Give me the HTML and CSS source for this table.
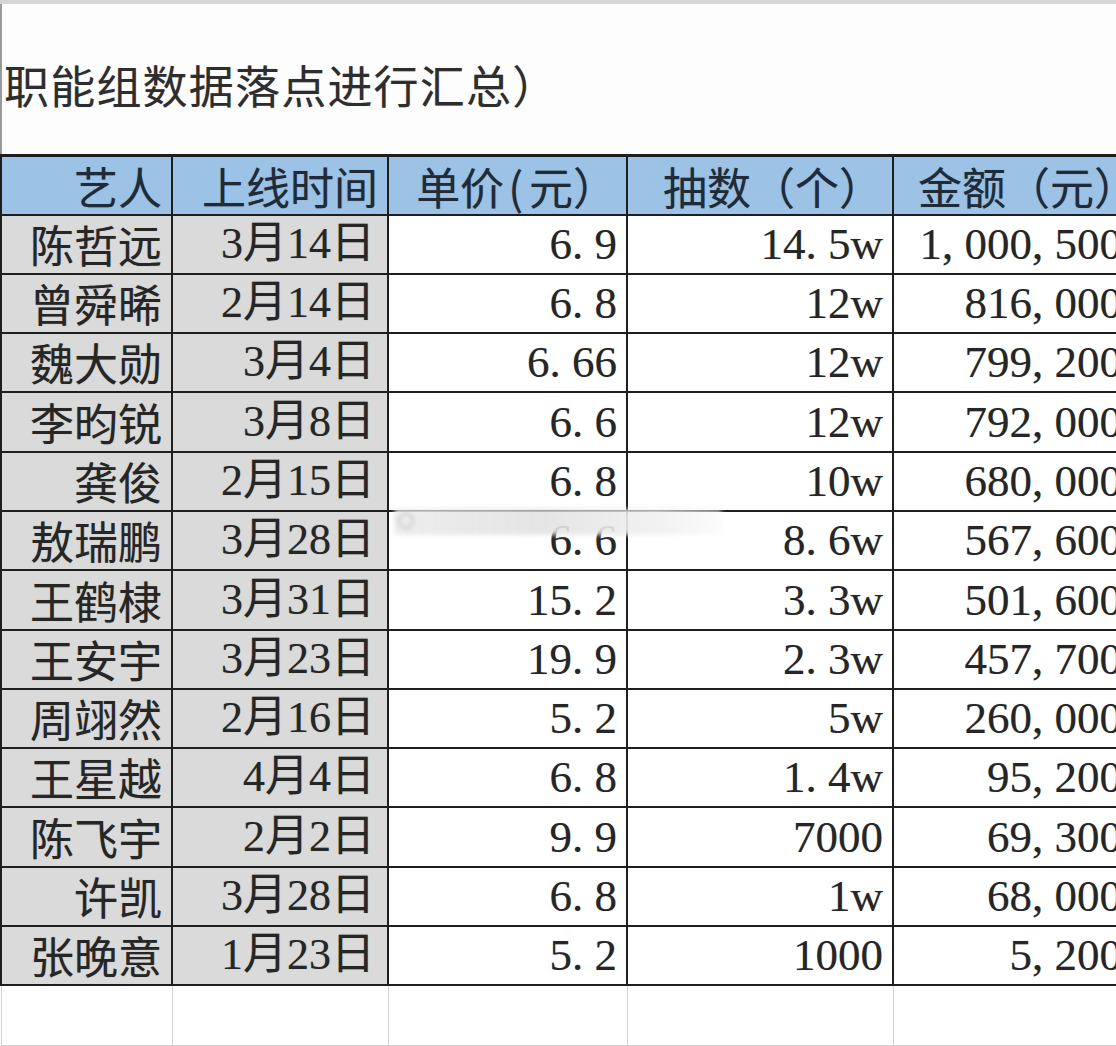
FILE: index.html
```html
<!DOCTYPE html>
<html lang="zh-CN">
<head>
<meta charset="utf-8">
<title>职能组数据落点进行汇总</title>
<link rel="stylesheet" href="styles.css">
</head>
<body>
<div class="sheet">
  <div class="topband"></div>
  <div class="title-area">
    <h1 class="title">职能组数据落点进行汇总）</h1>
  </div>
  <table class="data">
    <colgroup>
      <col class="c-name"><col class="c-date"><col class="c-price"><col class="c-count"><col class="c-amount">
    </colgroup>
    <thead>
      <tr>
        <th>艺人</th><th>上线时间</th><th>单价<span class="hp">(</span>元）</th><th>抽数（个）</th><th class="h-amount">金额（元）</th>
      </tr>
    </thead>
    <tbody>
      <tr><td class="name">陈哲远</td><td class="date">3月14日</td><td class="num">6<span class="p">.</span>9</td><td class="num">14<span class="p">.</span>5w</td><td class="num amt">1<span class="p">,</span>000<span class="p">,</span>500</td></tr>
      <tr><td class="name">曾舜晞</td><td class="date">2月14日</td><td class="num">6<span class="p">.</span>8</td><td class="num">12w</td><td class="num amt">816<span class="p">,</span>000</td></tr>
      <tr><td class="name">魏大勋</td><td class="date">3月4日</td><td class="num">6<span class="p">.</span>66</td><td class="num">12w</td><td class="num amt">799<span class="p">,</span>200</td></tr>
      <tr><td class="name">李昀锐</td><td class="date">3月8日</td><td class="num">6<span class="p">.</span>6</td><td class="num">12w</td><td class="num amt">792<span class="p">,</span>000</td></tr>
      <tr><td class="name">龚俊</td><td class="date">2月15日</td><td class="num">6<span class="p">.</span>8</td><td class="num">10w</td><td class="num amt">680<span class="p">,</span>000</td></tr>
      <tr><td class="name">敖瑞鹏</td><td class="date">3月28日</td><td class="num">6<span class="p">.</span>6</td><td class="num">8<span class="p">.</span>6w</td><td class="num amt">567<span class="p">,</span>600</td></tr>
      <tr><td class="name">王鹤棣</td><td class="date">3月31日</td><td class="num">15<span class="p">.</span>2</td><td class="num">3<span class="p">.</span>3w</td><td class="num amt">501<span class="p">,</span>600</td></tr>
      <tr><td class="name">王安宇</td><td class="date">3月23日</td><td class="num">19<span class="p">.</span>9</td><td class="num">2<span class="p">.</span>3w</td><td class="num amt">457<span class="p">,</span>700</td></tr>
      <tr><td class="name">周翊然</td><td class="date">2月16日</td><td class="num">5<span class="p">.</span>2</td><td class="num">5w</td><td class="num amt">260<span class="p">,</span>000</td></tr>
      <tr><td class="name">王星越</td><td class="date">4月4日</td><td class="num">6<span class="p">.</span>8</td><td class="num">1<span class="p">.</span>4w</td><td class="num amt">95<span class="p">,</span>200</td></tr>
      <tr><td class="name">陈飞宇</td><td class="date">2月2日</td><td class="num">9<span class="p">.</span>9</td><td class="num">7000</td><td class="num amt">69<span class="p">,</span>300</td></tr>
      <tr><td class="name">许凯</td><td class="date">3月28日</td><td class="num">6<span class="p">.</span>8</td><td class="num">1w</td><td class="num amt">68<span class="p">,</span>000</td></tr>
      <tr><td class="name">张晚意</td><td class="date">1月23日</td><td class="num">5<span class="p">.</span>2</td><td class="num">1000</td><td class="num amt">5<span class="p">,</span>200</td></tr>
      <tr class="empty"><td></td><td></td><td></td><td></td><td></td></tr>
    </tbody>
  </table>
  <div class="watermark"><span class="wm-logo"></span></div>
</div>
</body>
</html>
```

FILE: styles.css
```css
html, body {
  margin: 0;
  padding: 0;
  background: #ffffff;
  overflow: hidden;
}

.sheet {
  position: relative;
  width: 1116px;
  height: 1046px;
  overflow: hidden;
  background: #fdfdfd;
}

.topband {
  height: 4px;
  background: #d6d6d6;
}

.title-area {
  height: 150px;
  border-left: 2px solid #9a9a9a;
  box-sizing: border-box;
  display: flex;
  align-items: flex-start;
}

.title {
  margin: 56px 0 0 2px;
  font-family: "Noto Sans CJK SC", sans-serif;
  font-weight: 400;
  font-size: 45px;
  line-height: 50px;
  color: #2e2e2e;
  letter-spacing: 1.2px;
  text-shadow: 0 0 1px rgba(0, 0, 0, 0.25);
}

.data {
  border-collapse: collapse;
  table-layout: fixed;
  width: 1152px;
  color: #262626;
}

.c-name { width: 171px; }
.c-date { width: 216px; }
.c-price { width: 239px; }
.c-count { width: 266px; }
.c-amount { width: 260px; }

.data th,
.data td {
  border: 2px solid #1e1e1e;
  height: 59.3px;
  padding: 0 9px 2px 0;
  text-align: right;
  vertical-align: bottom;
  white-space: nowrap;
  font-size: 44px;
  line-height: 54px;
  box-sizing: border-box;
  text-shadow: 0 0 1px rgba(0, 0, 0, 0.3);
}

.data th {
  height: 59px;
  padding-bottom: 1px;
  background: #9cc2e5;
  font-family: "Noto Sans CJK SC", sans-serif;
  font-weight: 400;
  color: #1f2b38;
  border-top-width: 3px;
}

.hp {
  margin: 0 6px 0 4px;
}

.data th.h-amount {
  text-align: left;
  padding: 0 0 1px 24px;
}

.name {
  background: #dadada;
  font-family: "Noto Sans CJK SC", sans-serif;
}

.date {
  background: #dadada;
  font-family: "Liberation Serif", "Noto Sans CJK SC", serif;
  padding-right: 12px !important;
}

.num {
  background: #ffffff;
  font-family: "Liberation Serif", "Noto Sans CJK SC", serif;
  font-size: 45px !important;
}

.num.amt {
  padding-right: 30px !important;
}

.p {
  margin-right: 0.25em;
}

.data tr.empty td {
  background: #ffffff;
  border: 1px solid #d2d2d2;
  border-top: 2px solid #1e1e1e;
  height: 60px;
  text-shadow: none;
}

.watermark {
  position: absolute;
  left: 394px;
  top: 509px;
  width: 328px;
  height: 26px;
  background: linear-gradient(90deg, rgba(236,236,236,0.95), rgba(226,226,226,0.9) 45%, rgba(240,240,240,0.9) 80%, rgba(250,250,250,0.6));
  filter: blur(2px);
  border-radius: 4px;
}

.wm-logo {
  position: absolute;
  left: 4px;
  top: 4px;
  width: 16px;
  height: 16px;
  border: 2px solid #c9c9c9;
  border-radius: 50%;
  box-sizing: border-box;
}
```
